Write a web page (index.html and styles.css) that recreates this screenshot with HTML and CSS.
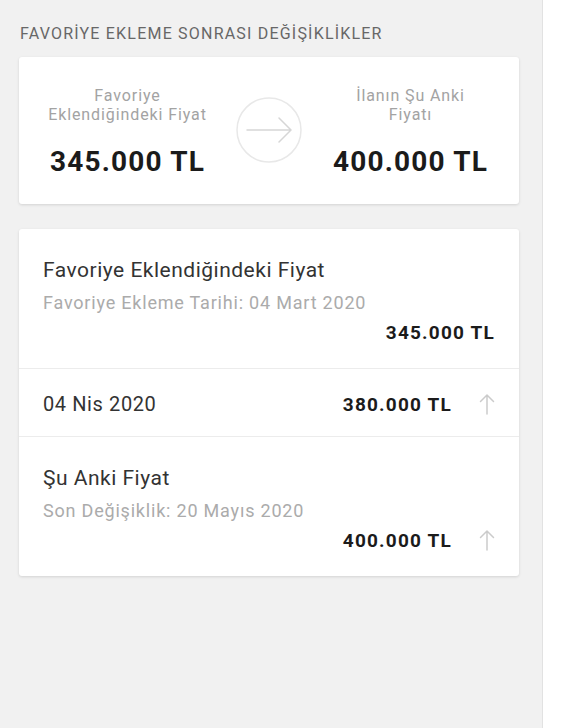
FILE: index.html
```html
<!DOCTYPE html>
<html lang="tr">
<head>
<meta charset="utf-8">
<link rel="stylesheet" href="styles.css">
</head>
<body>
<div class="page">
  <main class="main">
    <h2 class="title">FAVORİYE EKLEME SONRASI DEĞİŞİKLİKLER</h2>
    <section class="card summary">
      <div class="col">
        <div class="label">Favoriye<br>Eklendiğindeki Fiyat</div>
        <div class="big">345.000 TL</div>
      </div>
      <div class="circle">
        <svg width="66" height="66" viewBox="0 0 66 66">
          <circle cx="33" cy="33" r="32" fill="none" stroke="#e8e8e8" stroke-width="1.5"/>
          <path d="M11 33 H54 M43 21 L55 33 L43 45" fill="none" stroke="#d6d6d6" stroke-width="1.5" stroke-linecap="round" stroke-linejoin="round"/>
        </svg>
      </div>
      <div class="col">
        <div class="label">İlanın Şu Anki<br>Fiyatı</div>
        <div class="big">400.000 TL</div>
      </div>
    </section>
    <section class="card history">
      <div class="item">
        <div class="item-title">Favoriye Eklendiğindeki Fiyat</div>
        <div class="item-sub">Favoriye Ekleme Tarihi: 04 Mart 2020</div>
        <div class="item-price"><span>345.000 TL</span></div>
      </div>
      <div class="row">
        <span class="row-date">04 Nis 2020</span>
        <span class="price">380.000 TL</span>
        <svg class="up" width="16" height="22" viewBox="0 0 16 22"><path d="M8 21 V2 M1.5 8.5 L8 2 L14.5 8.5" fill="none" stroke="#cbcbcb" stroke-width="1.5" stroke-linecap="round" stroke-linejoin="round"/></svg>
      </div>
      <div class="item">
        <div class="item-title">Şu Anki Fiyat</div>
        <div class="item-sub">Son Değişiklik: 20 Mayıs 2020</div>
        <div class="item-price"><span class="price">400.000 TL</span>
          <svg class="up" width="16" height="22" viewBox="0 0 16 22"><path d="M8 21 V2 M1.5 8.5 L8 2 L14.5 8.5" fill="none" stroke="#cbcbcb" stroke-width="1.5" stroke-linecap="round" stroke-linejoin="round"/></svg>
        </div>
      </div>
    </section>
  </main>
  <aside class="side"></aside>
</div>
</body>
</html>
```
FILE: styles.css
```css
html, body {
  margin: 0;
  padding: 0;
  height: 100%;
}
body {
  font-family: Roboto, "Liberation Sans", sans-serif;
  background: #ffffff;
}
.page {
  display: flex;
  height: 728px;
}
.main {
  width: 543px;
  background: #f1f1f1;
  border-right: 1px solid #e2e2e2;
  padding: 24px 23px 0 19px;
  box-sizing: border-box;
}
.side {
  flex: 1;
  background: #fff;
}
.title {
  margin: 0 0 0 1px;
  font-size: 16px;
  font-weight: 400;
  color: #676767;
  line-height: 20px;
  letter-spacing: 1.2px;
}
.card {
  background: #fff;
  border-radius: 3px;
  box-shadow: 0 1px 3px rgba(0,0,0,0.13);
}
.summary {
  margin-top: 13px;
  height: 147px;
  display: grid;
  grid-template-columns: 1fr 66px 1fr;
  align-items: start;
  padding-top: 29px;
  box-sizing: border-box;
}
.col {
  text-align: center;
}
.circle {
  width: 66px;
  height: 66px;
  margin-top: 11px;
}
.circle svg { display: block; }
.label {
  font-size: 16px;
  line-height: 19px;
  color: #a3a3a3;
  letter-spacing: 0.9px;
}
.big {
  margin-top: 22px;
  font-size: 28px;
  font-weight: 700;
  color: #1b1b1b;
  line-height: 32px;
  letter-spacing: 1.2px;
}
.history {
  margin-top: 25px;
}
.item {
  padding: 28px 24px 24px 24px;
  border-bottom: 1px solid #ececec;
}
.item:last-child { border-bottom: none; }
.item-title {
  font-size: 21px;
  line-height: 26px;
  color: #333;
  letter-spacing: 0.5px;
}
.item-sub {
  margin-top: 9px;
  font-size: 18px;
  line-height: 22px;
  color: #ababab;
  letter-spacing: 0.8px;
}
.item-price {
  display: flex;
  justify-content: flex-end;
  align-items: center;
  margin-top: 6px;
  height: 24px;
  font-size: 19px;
  font-weight: 700;
  color: #1b1b1b;
  letter-spacing: 1.2px;
}
.row {
  display: flex;
  align-items: center;
  height: 68px;
  padding: 3px 24px 0 24px;
  box-sizing: border-box;
  border-bottom: 1px solid #ececec;
}
.row-date {
  flex: 1;
  font-size: 20px;
  color: #333;
  letter-spacing: 0.6px;
}
.price {
  font-size: 19px;
  font-weight: 700;
  color: #1b1b1b;
  letter-spacing: 1.2px;
}
.up {
  margin-left: 27px;
  display: block;
}
```
